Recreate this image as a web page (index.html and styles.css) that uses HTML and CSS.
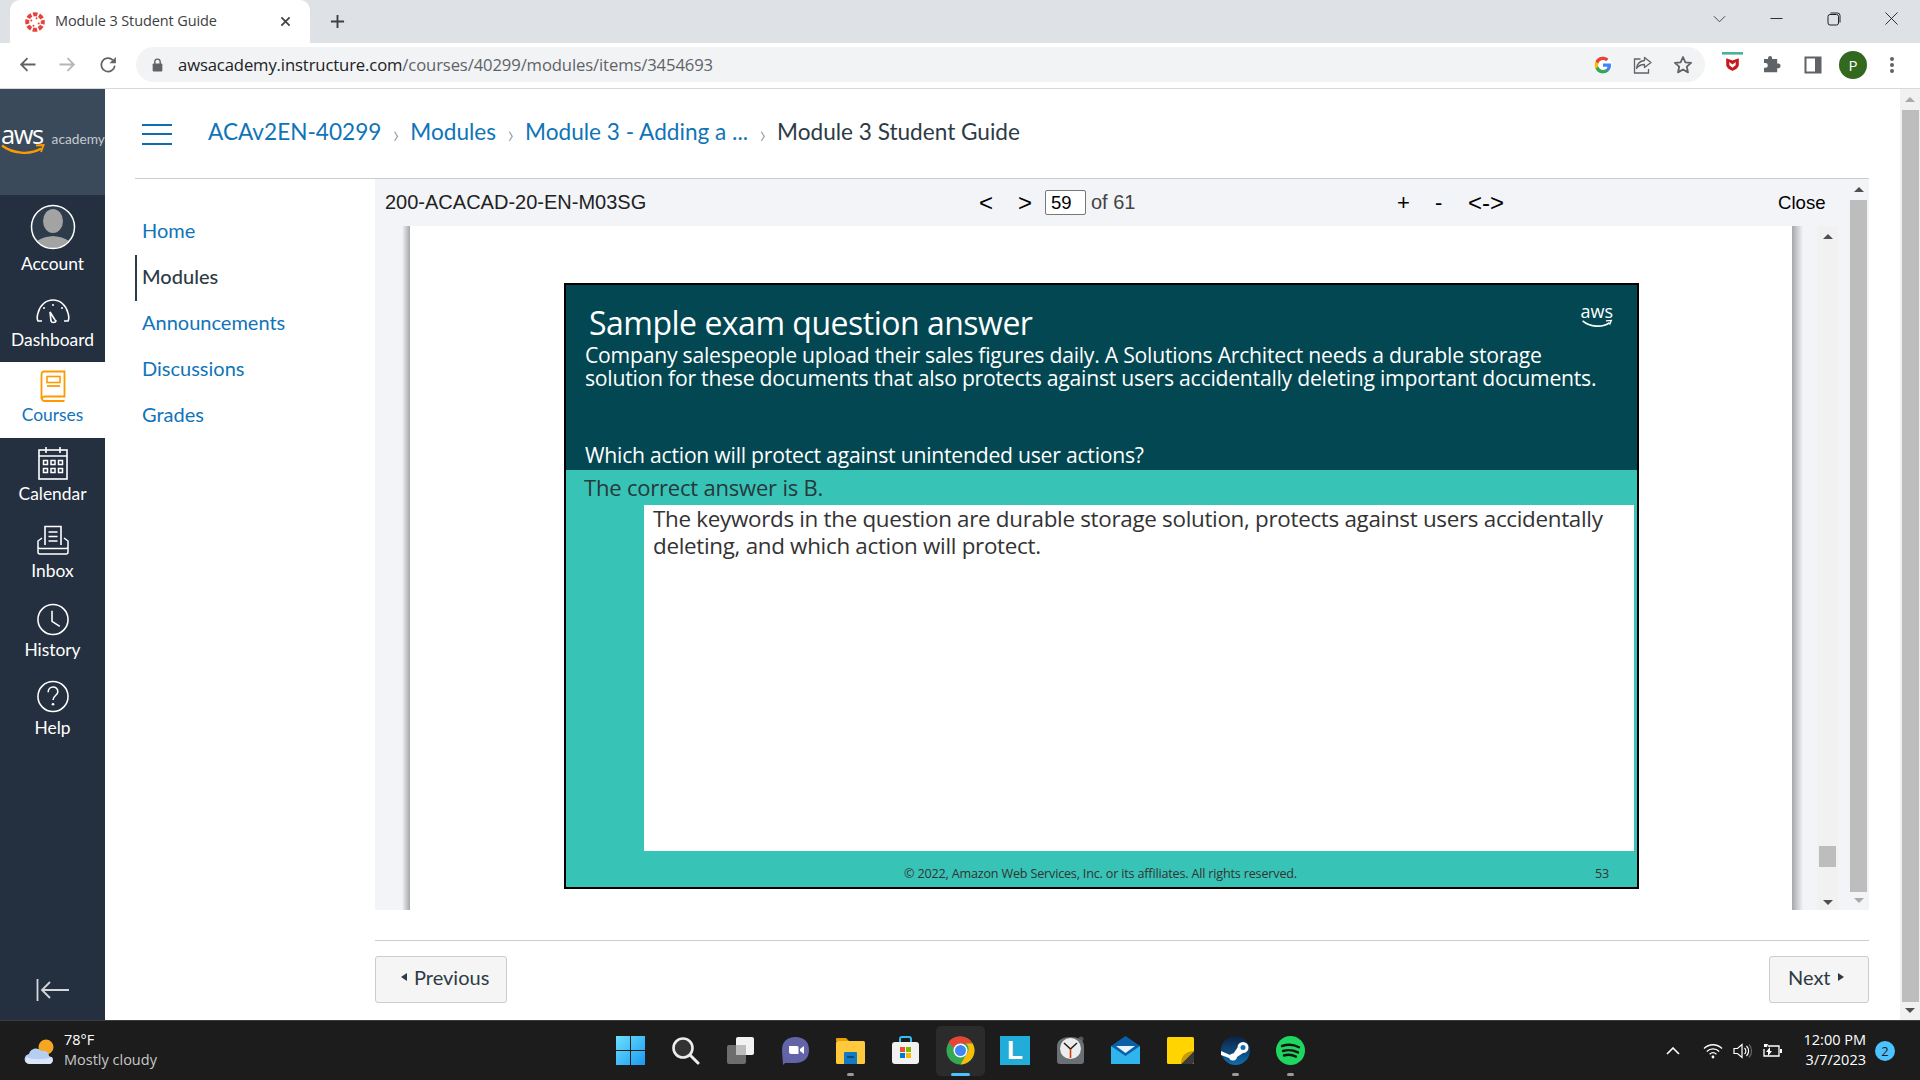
FILE: index.html
```html
<!DOCTYPE html>
<html lang="en">
<head>
<meta charset="utf-8">
<title>Module 3 Student Guide</title>
<link rel="stylesheet" href="styles.css">
</head>
<body>
<div class="app">
  <div class="tabstrip">
    <div class="tab">
      <svg class="favicon" viewBox="0 0 20 20"><circle cx="10" cy="10" r="7.800" fill="none" stroke="#e5433a" stroke-width="4" stroke-dasharray="4.400 1.726" stroke-dashoffset="2.200"/><g fill="#e5433a"><circle cx="11.500" cy="6.300" r="1"/><circle cx="13.700" cy="11.500" r="1"/><circle cx="8.500" cy="13.700" r="1"/><circle cx="6.300" cy="8.500" r="1"/></g></svg>
      <span class="tab-title">Module 3 Student Guide</span>
      <svg class="tab-close" viewBox="0 0 12 12"><path d="M1.500 1.500l9 9M10.500 1.500l-9 9" stroke="#3c4043" stroke-width="1.800" fill="none"/></svg>
    </div>
    <svg class="new-tab" viewBox="0 0 16 16"><path d="M8 1v14M1 8h14" stroke="#3c4043" stroke-width="2" fill="none"/></svg>
    <div class="win-controls">
      <svg class="win-btn w-list" viewBox="0 0 14 8"><path d="M1 1l6 6 6-6" stroke="#3c4043" stroke-width="1" fill="none"/></svg>
      <svg class="win-btn w-min" viewBox="0 0 14 14"><path d="M0.500 7h13" stroke="#202124" stroke-width="1" fill="none"/></svg>
      <svg class="win-btn w-max" viewBox="0 0 14 14"><rect x="1" y="2.500" width="10.500" height="10.500" rx="2" stroke="#202124" fill="none"/><path d="M3.500 1h7a2.500 2.500 0 0 1 2.500 2.500v7" stroke="#202124" fill="none"/></svg>
      <svg class="win-btn w-close" viewBox="0 0 14 14"><path d="M0.500 0.500l13 13M13.500 0.500l-13 13" stroke="#202124" stroke-width="1" fill="none"/></svg>
    </div>
  </div>
  <div class="toolbar">
    <svg class="tb-icon tb-back" viewBox="0 0 16 16"><path d="M15.500 8H2M8 2L2 8l6 6" stroke="#5f6368" stroke-width="1.700" fill="none"/></svg>
    <svg class="tb-icon tb-fwd" viewBox="0 0 16 16"><path d="M.5 8H14M8 2l6 6-6 6" stroke="#b4b6b9" stroke-width="1.700" fill="none"/></svg>
    <svg class="tb-icon tb-reload" viewBox="0 0 16 16"><path d="M14 8.500A6 6 0 1 1 12.300 3.700" stroke="#5f6368" stroke-width="1.500" fill="none"/><path d="M15 .8v5.700H9.300z" fill="#5f6368"/></svg>
    <div class="omnibox">
      <svg class="lock" viewBox="0 0 10 13"><path d="M2.500 5.500V3.500a2.500 2.500 0 0 1 5 0v2" stroke="#5f6368" stroke-width="1.300" fill="none"/><rect x="0.500" y="5" width="9" height="7.500" rx="1" fill="#5f6368"/></svg>
      <span class="url"><span class="url-host">awsacademy.instructure.com</span>/courses/40299/modules/items/3454693</span>
      <svg class="omni-g" viewBox="0 0 18 18"><path d="M17 9.200c0-.6-.05-1.100-.15-1.600H9v3.100h4.500a3.900 3.900 0 0 1-1.700 2.500v2.100h2.700C16.100 13.800 17 11.700 17 9.200z" fill="#4285f4"/><path d="M9 17.400c2.300 0 4.200-.8 5.500-2.100l-2.700-2.100c-.7.500-1.700.8-2.800.8-2.200 0-4-1.500-4.700-3.400H1.500v2.100A8.300 8.300 0 0 0 9 17.400z" fill="#34a853"/><path d="M4.300 10.600a5 5 0 0 1 0-3.200V5.300H1.500a8.300 8.300 0 0 0 0 7.400z" fill="#fbbc05"/><path d="M9 3.900c1.200 0 2.300.4 3.200 1.300l2.400-2.400A8.300 8.300 0 0 0 1.500 5.300l2.800 2.100C5 5.400 6.800 3.900 9 3.900z" fill="#ea4335"/></svg>
      <svg class="omni-share" viewBox="0 0 20 20"><path d="M11.500 2.500L18 7.500l-6.500 5V9.500c-3.500 0-6 1-8 4 .5-4 3-7.500 8-8z" fill="none" stroke="#5f6368" stroke-width="1.300" stroke-linejoin="round"/><path d="M7.500 4H1.500v14h14v-4" fill="none" stroke="#5f6368" stroke-width="1.300"/></svg>
      <svg class="omni-star" viewBox="0 0 20 20"><path d="M10 2l2.400 5.300 5.700.6-4.300 3.800 1.200 5.700L10 14.500l-5 2.900 1.200-5.700L1.900 7.900l5.700-.6z" fill="none" stroke="#5f6368" stroke-width="1.800" stroke-linejoin="round"/></svg>
    </div>
    <div class="ext-group">
      <svg class="ext ext-mc" viewBox="0 0 20 20"><rect x="0" y="0" width="20" height="2.500" fill="#48b596"/><path d="M4 6l6 2 6-2v6c0 3-3 5-6 6-3-1-6-3-6-6z" fill="#c8171e"/><path d="M7 9.500l3 2.500 3-2.500v3l-3 2.500-3-2.500z" fill="#fff"/></svg>
      <svg class="ext ext-puzzle" viewBox="0 0 18 18"><path d="M7 1a2 2 0 0 1 2 2v1h5v4.500h1.500a2.300 2.300 0 0 1 0 4.500H14v4H1v-4.500h1.500a2.200 2.200 0 0 0 0-4.500H1V4h4V3a2 2 0 0 1 2-2z" fill="#5f6368" transform="scale(.96)"/></svg>
      <svg class="ext ext-side" viewBox="0 0 18 18"><rect x="0.500" y="0.500" width="17" height="17" fill="#5f6368"/><rect x="2.500" y="2.500" width="8.500" height="13" fill="#fff"/></svg>
      <span class="avatar-p">P</span>
      <svg class="ext ext-menu" viewBox="0 0 6 18"><circle cx="3" cy="3" r="2" fill="#5f6368"/><circle cx="3" cy="9" r="2" fill="#5f6368"/><circle cx="3" cy="15" r="2" fill="#5f6368"/></svg>
    </div>
  </div>

  <div class="main">
    <nav class="globalnav">
      <div class="gn-logo">
        <span class="aws-word">aws</span><span class="aws-academy">academy</span>
        <svg class="aws-smile" viewBox="0 0 44 11"><path d="M1 1.500c10 8 28 10 39 3" stroke="#f90" stroke-width="2.300" fill="none"/><path d="M35 1.500l7.500-.5-2.500 7" stroke="#f90" stroke-width="1.900" fill="none"/></svg>
      </div>
      <a class="gn-item gn-account">
        <svg class="gn-avatar" viewBox="0 0 46 46"><defs><clipPath id="avc"><circle cx="23" cy="23" r="21"/></clipPath></defs><circle cx="23" cy="23" r="21.500" fill="#2d3b4a"/><g clip-path="url(#avc)" fill="#a3a3a3"><ellipse cx="23" cy="17" rx="10" ry="12"/><path d="M3 46c0-10 10-13 20-14 10 1 20 4 20 14z"/></g><circle cx="23" cy="23" r="21.500" fill="none" stroke="#fff" stroke-width="1.500"/></svg>
        <span>Account</span>
      </a>
      <a class="gn-item gn-dash">
        <svg class="gn-ico" viewBox="0 0 34 26"><path d="M6 23H2c-1-2-1-5 0-8C4 7 10 2 17 2s13 5 15 13c1 3 1 6 0 8h-4" fill="none" stroke="#fff" stroke-width="1.600"/><path d="M14 14l1 9c.5 2 4.500 2 5 0l-1-1z" fill="none" stroke="#fff" stroke-width="1.600"/><circle cx="8" cy="10" r="1" fill="#fff"/><circle cx="17" cy="7" r="1" fill="#fff"/><circle cx="26" cy="10" r="1" fill="#fff"/></svg>
        <span>Dashboard</span>
      </a>
      <a class="gn-item gn-courses">
        <svg class="gn-ico" viewBox="0 0 26 32"><path d="M4 1.500h20.500v25H5c-4 0-4 4.500 0 4.500h19.500" fill="none" stroke="#ff9900" stroke-width="1.800"/><path d="M1.500 29V4.500C1.500 2.500 2.500 1.500 4 1.500" fill="none" stroke="#ff9900" stroke-width="1.800"/><rect x="7" y="6.500" width="13" height="6" fill="none" stroke="#ff9900" stroke-width="1.600"/><path d="M7 16h13" stroke="#ff9900" stroke-width="1.800"/></svg>
        <span>Courses</span>
      </a>
      <a class="gn-item gn-cal">
        <svg class="gn-ico" viewBox="0 0 30 34"><rect x="1" y="4" width="28" height="29" fill="none" stroke="#fff" stroke-width="1.600"/><path d="M1 10h28M8 1v6M22 1v6" stroke="#fff" stroke-width="1.600" fill="none"/><g fill="none" stroke="#fff" stroke-width="1.500"><rect x="5.500" y="14.500" width="4" height="4"/><rect x="13" y="14.500" width="4" height="4"/><rect x="20.500" y="14.500" width="4" height="4"/><rect x="5.500" y="22.500" width="4" height="4"/><rect x="13" y="22.500" width="4" height="4"/><rect x="20.500" y="22.500" width="4" height="4"/></g></svg>
        <span>Calendar</span>
      </a>
      <a class="gn-item gn-inbox">
        <svg class="gn-ico" viewBox="0 0 34 30"><path d="M9 20V1.500h16V20" fill="none" stroke="#fff" stroke-width="1.600"/><path d="M12.500 7h9M12.500 11.500h9M12.500 16h9" stroke="#fff" stroke-width="1.500"/><path d="M6 13l-4 3v11c0 1 1 2 2 2h26c1 0 2-1 2-2V16l-4-3M2 18v4c0 1 1 1.500 2 1.500h26c1 0 2-.5 2-1.500v-4" fill="none" stroke="#fff" stroke-width="1.500"/></svg>
        <span>Inbox</span>
      </a>
      <a class="gn-item gn-hist">
        <svg class="gn-ico" viewBox="0 0 34 34"><circle cx="17" cy="17" r="15.500" fill="none" stroke="#fff" stroke-width="1.600"/><path d="M16 8v11l8 5" fill="none" stroke="#fff" stroke-width="1.600"/></svg>
        <span>History</span>
      </a>
      <a class="gn-item gn-help">
        <svg class="gn-ico" viewBox="0 0 34 34"><circle cx="17" cy="17" r="15.500" fill="none" stroke="#fff" stroke-width="1.600"/><path d="M12 12.500c0-7 10-7 10-.5 0 4-5 4-5 8.500" fill="none" stroke="#fff" stroke-width="1.600"/><circle cx="17" cy="25" r="1.400" fill="#fff"/></svg>
        <span>Help</span>
      </a>
      <svg class="gn-collapse" viewBox="0 0 34 22"><path d="M1.500 0v22M33 11H6M14 3l-8 8 8 8" fill="none" stroke="#d4d7da" stroke-width="1.800"/></svg>
    </nav>

    <div class="content">
      <header class="crumbs">
        <div class="hamburger"><i></i><i></i><i></i></div>
        <a class="crumb crumb-a">ACAv2EN-40299</a><span class="sep">›</span>
        <a class="crumb">Modules</a><span class="sep">›</span>
        <a class="crumb">Module 3 - Adding a ...</a><span class="sep">›</span>
        <span class="crumb crumb-cur">Module 3 Student Guide</span>
      </header>
      <div class="body-row">
        <ul class="subnav">
          <li><a>Home</a></li>
          <li class="active"><a>Modules</a></li>
          <li><a>Announcements</a></li>
          <li><a>Discussions</a></li>
          <li><a>Grades</a></li>
        </ul>
        <div class="column">
          <section class="viewer">
            <div class="viewer-left">
              <div class="v-toolbar">
                <span class="v-title">200-ACACAD-20-EN-M03SG</span>
                <span class="v-prev">&lt;</span>
                <span class="v-next">&gt;</span>
                <span class="v-input">59</span>
                <span class="v-of">of 61</span>
                <span class="v-plus">+</span>
                <span class="v-minus">-</span>
                <span class="v-fit">&lt;-&gt;</span>
                <span class="v-close">Close</span>
              </div>
              <div class="v-pages">
                <div class="strip-l"></div>
                <div class="page">
                  <div class="slide">
                    <div class="slide-top">
                      <svg class="slide-aws-smile" viewBox="0 0 34 10"><path d="M1 2c8 7 22 8 30 2" stroke="#fff" stroke-width="1.800" fill="none"/><path d="M27 2l6-.5-2 5" stroke="#fff" stroke-width="1.400" fill="none"/></svg>
                      <span class="slide-aws">aws</span>
                      <h2 class="slide-title">Sample exam question answer</h2>
                      <p class="slide-q">Company salespeople upload their sales figures daily. A Solutions Architect needs a durable storage<br>solution for these documents that also protects against users accidentally deleting important documents.</p>
                      <p class="slide-which">Which action will protect against unintended user actions?</p>
                    </div>
                    <div class="slide-bottom">
                      <p class="slide-correct">The correct answer is B.</p>
                      <div class="slide-box">The keywords in the question are durable storage solution, protects against users accidentally<br>deleting, and which action will protect.</div>
                      <div class="slide-foot"><span class="foot-c">© 2022, Amazon Web Services, Inc. or its affiliates. All rights reserved.</span><span class="foot-n">53</span></div>
                    </div>
                  </div>
                </div>
                <div class="strip-r"></div>
                <div class="sb sb-inner">
                  <span class="arr up dark"></span>
                  <span class="sb-thumb small"></span>
                  <span class="arr down dark"></span>
                </div>
                <div class="strip-gap"></div>
              </div>
            </div>
            <div class="sb sb-viewer">
              <span class="arr up dark"></span>
              <span class="sb-thumb grow"></span>
              <span class="arr down"></span>
            </div>
          </section>
          <footer class="pager">
            <a class="btn btn-prev"><i class="tri-l"></i>Previous</a>
            <a class="btn btn-next">Next<i class="tri-r"></i></a>
          </footer>
        </div>
      </div>
    </div>

    <div class="sb sb-page">
      <span class="arr up"></span>
      <span class="sb-thumb grow"></span>
      <span class="arr down dark"></span>
    </div>
  </div>

  <div class="taskbar">
    <div class="tk-left">
      <svg class="weather" viewBox="0 0 32 26"><circle cx="22" cy="8" r="7.500" fill="#f5a623"/><path d="M6 25c-7 0-7-9-1-10 1-5 8-8 12-3 5-1 8 2 8 5 5 1 5 8 0 8z" fill="#b5cef2"/><path d="M6 25c-5 0-6-5-3-7 4 3 17 3 25 0 2 3 0 7-3 7z" fill="#dbe7f8"/></svg>
      <div class="w-text"><span class="w-temp">78°F</span><span class="w-desc">Mostly cloudy</span></div>
    </div>
    <div class="tk-center">
      <div class="tk-slot"><svg class="tk-ico" viewBox="0 0 29 29"><defs><linearGradient id="wg" x1="0" y1="0" x2="1" y2="1"><stop offset="0" stop-color="#6ce0ff"/><stop offset="1" stop-color="#1a9af0"/></linearGradient></defs><path fill="url(#wg)" d="M0 0h14v14H0zM15 0h14v14H15zM0 15h14v14H0zM15 15h14v14H15z"/></svg></div>
      <div class="tk-slot"><svg class="tk-ico" viewBox="0 0 29 29"><circle cx="12" cy="12" r="9.500" fill="#333" stroke="#ececec" stroke-width="2.600"/><path d="M19 19l8 8" stroke="#ececec" stroke-width="3" stroke-linecap="round"/></svg></div>
      <div class="tk-slot"><svg class="tk-ico" viewBox="0 0 29 29"><rect x="10" y="1" width="18" height="18" rx="2" fill="#f2f2f2"/><rect x="1" y="9" width="19" height="19" rx="2" fill="#6d6d6d"/><rect x="10" y="9" width="10" height="10" fill="#bdbdbd"/></svg></div>
      <div class="tk-slot"><svg class="tk-ico" viewBox="0 0 29 29"><path d="M14.500 1C23 1 28 6 28 14s-5 13-13.500 13H4l-2 2c0-4-1-10-1-15C1 6 6 1 14.500 1z" fill="#6264a7"/><path d="M8 10h8a1.500 1.500 0 0 1 1.500 1.500V18H10a2 2 0 0 1-2-2zM19 13l4-3v8l-4-3z" fill="#fff"/></svg></div>
      <div class="tk-slot"><svg class="tk-ico" viewBox="0 0 29 29"><path d="M0 3a1 1 0 0 1 1-1h9l3 3H0z" fill="#e8a100"/><rect y="5" width="29" height="23" rx="1.500" fill="#ffc83d"/><path d="M9 16h11a1 1 0 0 1 1 1v11H8V17a1 1 0 0 1 1-1z" fill="#1279c4"/><rect x="11" y="20" width="7" height="2" fill="#0b4a7d"/></svg><i class="tk-dot"></i></div>
      <div class="tk-slot"><svg class="tk-ico" viewBox="0 0 29 29"><path d="M9 7V3a2 2 0 0 1 2-2h7a2 2 0 0 1 2 2v4" fill="none" stroke="#35bdf0" stroke-width="2"/><rect x="1" y="6" width="27" height="22" rx="3" fill="#f2f2f2"/><rect x="9" y="11" width="5" height="5" fill="#f25022"/><rect x="15" y="11" width="5" height="5" fill="#7fba00"/><rect x="9" y="17" width="5" height="5" fill="#0078d4"/><rect x="15" y="17" width="5" height="5" fill="#ffb900"/></svg></div>
      <div class="tk-slot tk-active"><svg class="tk-ico" viewBox="0 0 29 29"><circle cx="14.500" cy="14.500" r="14" fill="#34a853"/><path d="M14.500.5a14 14 0 0 1 12.100 7H14.500a7 7 0 0 0-6.600 4.700L2.500 6a14 14 0 0 1 12-5.500z" fill="#ea4335"/><path d="M26.600 7.500A14 14 0 0 1 14.500 28.500l6-10.500a7 7 0 0 0-.5-10.500z" fill="#fbbc05"/><circle cx="14.500" cy="14.500" r="7" fill="#fff"/><circle cx="14.500" cy="14.500" r="5.500" fill="#4285f4"/></svg><i class="tk-bar"></i></div>
      <div class="tk-slot"><span class="tk-l">L</span></div>
      <div class="tk-slot"><svg class="tk-ico" viewBox="0 0 29 29"><circle cx="25" cy="3" r="2.500" fill="#555"/><path d="M1 10C1 4 7 1 14.500 1S28 4 28 10v15a3 3 0 0 1-3 3H4a3 3 0 0 1-3-3z" fill="#6b7076"/><circle cx="14.500" cy="12.500" r="10.500" fill="#ededed"/><path d="M8 7l6.500 6L21 7" stroke="#222" stroke-width="1.600" fill="none"/><path d="M14.500 13v9" stroke="#d83b01" stroke-width="1.600"/></svg></div>
      <div class="tk-slot"><svg class="tk-ico" viewBox="0 0 29 29"><path d="M14.500 0L29 10v18H0V10z" fill="#0b5fa8"/><path d="M0 10l14.500 10L29 10v18H0z" fill="#2fb4ee"/><path d="M5 10h19l-9.500 7z" fill="#e8f3fa"/></svg></div>
      <div class="tk-slot"><svg class="tk-ico" viewBox="0 0 29 29"><rect x="1" y="1" width="27" height="27" rx="1.500" fill="#ffd400"/><path d="M15 28l13-13v11a2 2 0 0 1-2 2z" fill="#3a3a3a"/><path d="M15 28c0-8 5-13 13-13" fill="#c89a00"/></svg></div>
      <div class="tk-slot"><svg class="tk-ico" viewBox="0 0 29 29"><defs><linearGradient id="stg" x1="0" y1="0" x2="0" y2="1"><stop offset="0" stop-color="#0d2140"/><stop offset="1" stop-color="#0f6cb0"/></linearGradient></defs><circle cx="14.500" cy="14.500" r="14.500" fill="url(#stg)"/><path d="M0 15l9 4c1-1 2-1.500 3.500-1.500l4-6a5.500 5.500 0 1 1 5.500 5.500l-6 4a4.200 4.200 0 0 1-8 1L0 19z" fill="#fff"/><circle cx="22" cy="11.500" r="2.500" fill="#1a6ca8"/></svg><i class="tk-dot"></i></div>
      <div class="tk-slot"><svg class="tk-ico" viewBox="0 0 29 29"><circle cx="14.500" cy="14.500" r="14.500" fill="#1ed760"/><path d="M6 10c6-2 12-1.500 17 1.200M7 15c5-1.500 10-1 15 1.400M8 19.500c4-1.200 8-.8 12 1.100" fill="none" stroke="#191414" stroke-width="2.400" stroke-linecap="round"/></svg><i class="tk-dot"></i></div>
    </div>
    <div class="tk-right">
      <svg class="tray tray-up" viewBox="0 0 14 8"><path d="M1 7l6-6 6 6" stroke="#fff" stroke-width="1.600" fill="none"/></svg>
      <svg class="tray tray-wifi" viewBox="0 0 20 16"><path d="M1 5.500c5-5 13-5 18 0M3.800 8.500c3.500-3.400 9-3.400 12.400 0M6.600 11.300c2-1.900 4.800-1.900 6.800 0" fill="none" stroke="#fff" stroke-width="1.300"/><circle cx="10" cy="14" r="1.400" fill="#fff"/></svg>
      <svg class="tray tray-vol" viewBox="0 0 20 16"><path d="M1 5.500h3.500L9 1.500v13l-4.500-4H1z" fill="none" stroke="#fff" stroke-width="1.200"/><path d="M11.500 5a4 4 0 0 1 0 6M13.500 3a7 7 0 0 1 0 10" fill="none" stroke="#fff" stroke-width="1.200"/><path d="M16 1.500a9.500 9.500 0 0 1 0 13" fill="none" stroke="#666" stroke-width="1.200"/></svg>
      <svg class="tray tray-bat" viewBox="0 0 20 16"><path d="M5 3h11v10H1V6" fill="none" stroke="#fff" stroke-width="1.300"/><rect x="17" y="6" width="2" height="4" fill="#fff"/><path d="M7 4v4h2l-4 5v-4H3z" fill="#fff"/><path d="M1 1h4l-1 3H1z" fill="#fff"/></svg>
      <div class="clock"><span>12:00 PM</span><span>3/7/2023</span></div>
      <span class="badge">2</span>
    </div>
  </div>
</div>
</body>
</html>
```

FILE: styles.css
```css
* { box-sizing: border-box; }
html, body { margin: 0; padding: 0; }
body { width: 1920px; height: 1080px; overflow: hidden; font-family: "Lato", "Open Sans", sans-serif; background: #fff; }
.app { width: 1920px; height: 1080px; display: flex; flex-direction: column; }

/* browser chrome */
.tabstrip { height: 43px; background: #dee1e6; display: flex; align-items: center; padding-left: 10px; flex: none; }
.tab { width: 300px; height: 43px; background: #fff; border-radius: 10px 10px 0 0; display: flex; align-items: center; padding-left: 15px; }
.favicon { width: 20px; height: 20px; flex: none; }
.tab-title { font: 14.5px "Open Sans", sans-serif; color: #3c4043; margin: 0 0 2px 10px; width: 225px; white-space: nowrap; letter-spacing: -0.1px; }
.tab-close { width: 11px; height: 11px; flex: none; }
.new-tab { width: 15px; height: 15px; margin-left: 20px; flex: none; }
.win-controls { margin-left: auto; display: flex; align-items: center; height: 43px; padding-bottom: 6px; }
.win-btn { display: block; flex: none; }
.w-list { width: 13px; height: 8px; margin-right: 44px; }
.w-min { width: 13px; height: 13px; margin-right: 44px; }
.w-max { width: 14px; height: 14px; margin-right: 44px; }
.w-close { width: 13px; height: 13px; margin-right: 22px; }

.toolbar { height: 46px; flex: none; background: #fff; border-bottom: 1px solid #d6d8da; display: flex; align-items: center; padding: 0 0 2px 19px; }
.tb-icon { flex: none; display: block; }
.tb-back { width: 17px; height: 17px; }
.tb-fwd { width: 17px; height: 17px; margin-left: 23px; }
.tb-reload { width: 18px; height: 18px; margin-left: 23px; }
.omnibox { width: 1569px; height: 35px; margin-left: 19px; border-radius: 18px; background: #f1f3f4; display: flex; align-items: center; padding-left: 16px; flex: none; }
.lock { width: 11px; height: 14px; flex: none; }
.url { font: 16.65px "Open Sans", sans-serif; color: #5f6368; margin-left: 15px; width: 1416px; white-space: nowrap; letter-spacing: -0.12px; }
.url-host { color: #202124; }
.omni-g { width: 18px; height: 18px; flex: none; background: #fff; border-radius: 50%; }
.omni-share { width: 20px; height: 20px; margin-left: 21px; flex: none; }
.omni-star { width: 20px; height: 20px; margin-left: 20px; flex: none; }
.ext-group { display: flex; align-items: center; margin-left: 17px; }
.ext { display: block; flex: none; }
.ext-mc { width: 21px; height: 21px; margin-top: -4px; }
.ext-puzzle { width: 19px; height: 19px; margin-left: 20px; }
.ext-side { width: 18px; height: 18px; margin-left: 22px; }
.avatar-p { width: 28px; height: 28px; margin-left: 17px; border-radius: 50%; background: #33691e; color: #fff; font: 15px "Open Sans", sans-serif; display: flex; align-items: center; justify-content: center; flex: none; }
.ext-menu { width: 6px; height: 18px; margin-left: 22px; }

.main { flex: 1; display: flex; min-height: 0; }

/* global nav */
.globalnav { width: 105px; flex: none; background: #243040; display: flex; flex-direction: column; }
.gn-logo { height: 106px; background: #3b4a5a; position: relative; display: flex; align-items: baseline; flex: none; padding-top: 30px; }
.aws-word { font: 500 25.5px/30px "Open Sans", sans-serif; color: #fff; margin-left: 1px; letter-spacing: -1.5px; }
.aws-academy { font: 13.7px "Lato", sans-serif; color: #c4cad0; margin-left: 9px; white-space: nowrap; }
.aws-smile { position: absolute; left: 1px; top: 55px; width: 44px; height: 11px; }
.gn-item { display: flex; flex-direction: column; align-items: center; color: #fff; font-size: 17.4px; line-height: 20px; flex: none; }
.gn-item span { display: block; }
.gn-account { height: 91px; padding-top: 9px; }
.gn-avatar { width: 46px; height: 46px; margin-bottom: 4px; }
.gn-ico { display: block; }
.gn-dash { height: 76px; padding-top: 12px; }
.gn-dash .gn-ico { width: 34px; height: 26px; margin-bottom: 6px; }
.gn-courses { height: 76px; background: #fff; color: #0f74b8; padding-top: 8px; }
.gn-courses .gn-ico { width: 26px; height: 32px; margin-bottom: 3px; }
.gn-cal { height: 78px; padding-top: 8px; }
.gn-cal .gn-ico { width: 30px; height: 34px; margin-bottom: 4px; }
.gn-inbox { height: 78px; padding-top: 9px; }
.gn-inbox .gn-ico { width: 34px; height: 30px; margin-bottom: 6px; }
.gn-hist { height: 78px; padding-top: 9px; }
.gn-hist .gn-ico { width: 34px; height: 33px; margin-bottom: 4px; }
.gn-help { height: 78px; padding-top: 8px; }
.gn-help .gn-ico { width: 34px; height: 33px; margin-bottom: 5px; }
.gn-collapse { width: 34px; height: 22px; margin: auto 0 19px 36px; display: block; }

/* content */
.content { flex: 1; min-width: 0; padding: 0 31px 0 30px; display: flex; flex-direction: column; }
.crumbs { height: 90px; flex: none; border-bottom: 1px solid #c7cdd1; display: flex; align-items: center; padding: 0 0 5px 7px; font-size: 22.6px; white-space: nowrap; }
.hamburger { width: 30px; height: 21px; display: flex; flex-direction: column; justify-content: space-between; margin: 6px 36px 0 0; }
.hamburger i { display: block; height: 2px; background: #0f6eb0; }
.crumb { color: #0f74b8; }
.crumb-cur { color: #2d3b45; }
.sep { color: #7b868e; font-size: 25px; line-height: 24px; width: 29px; text-align: center; font-weight: 300; margin-top: 3px; }
.body-row { flex: 1; display: flex; min-height: 0; }
.subnav { width: 240px; flex: none; margin: 0; padding: 30px 0 0; list-style: none; font-size: 20px; }
.subnav li { height: 46px; display: flex; align-items: center; padding: 0 0 4px 7px; color: #0f74b8; }
.subnav li.active { color: #2d3b45; font-weight: 500; box-shadow: inset 2px 0 0 #2d3b45; }
.column { flex: 1; min-width: 0; display: flex; flex-direction: column; }

.viewer { height: 731px; display: flex; flex: none; }
.viewer-left { flex: 1; min-width: 0; display: flex; flex-direction: column; }
.v-toolbar { height: 47px; flex: none; background: #f3f4f8; display: grid; grid-template-columns: 594px 39px 27px 46px 306px 38px 33px 310px 1fr; align-items: center; font: 20px "Liberation Sans", sans-serif; color: #222; padding: 0 0 0 10px; }
.v-title { white-space: nowrap; }
.v-prev, .v-next { font-size: 24px; color: #000; }
.v-input { width: 41px; height: 25px; border: 1px solid #777; border-radius: 2px; background: #fff; font-size: 18.5px; color: #000; display: flex; align-items: center; padding-left: 5px; }
.v-of { color: #444; }
.v-plus, .v-minus { color: #000; font-size: 22px; }
.v-fit { color: #000; font-size: 24px; }
.v-close { color: #000; font-size: 18.6px; }
.v-pages { flex: 1; display: flex; min-height: 0; background: #f3f4f8; }
.strip-l { width: 35px; flex: none; background: linear-gradient(90deg, #f3f4f8 0, #f3f4f8 27px, #a5a6aa 35px); }
.page { width: 1382px; flex: none; background: #fff; padding: 57px 0 0 154px; }
.strip-r { width: 25px; flex: none; background: linear-gradient(90deg, #a5a6aa 0, #f3f4f8 11px); }
.strip-gap { width: 10px; flex: none; }

/* scrollbars */
.sb { display: flex; flex-direction: column; align-items: center; background: #f1f1f1; flex: none; }
.sb-viewer { width: 21px; background: #f3f4f8; }
.sb-inner { width: 21px; }
.sb-page { width: 20px; margin-left: auto; }
.arr { display: block; flex: none; width: 0; height: 0; border-left: 5px solid transparent; border-right: 5px solid transparent; }
.arr.up { border-bottom: 5px solid #a9a9a9; margin: 8px 0 8px; }
.arr.down { border-top: 5px solid #a9a9a9; margin: 6px 0 7px; }
.sb-inner .arr.down { margin: 8px 0 5px; }
.arr.dark.up { border-bottom-color: #505050; }
.arr.dark.down { border-top-color: #505050; }
.sb-thumb { display: block; width: 17px; background: #bdbdbd; }
.sb-thumb.grow { flex: 1; }
.sb-thumb.small { height: 21px; margin-top: auto; margin-bottom: 25px; }

/* slide */
.slide { width: 1075px; height: 606px; border: 2px solid #000; display: flex; flex-direction: column; font-family: "Open Sans", sans-serif; }
.slide-top { height: 185px; flex: none; background: #024751; color: #fff; position: relative; padding: 18px 0 0 19px; }
.slide-aws { position: absolute; right: 24px; top: 17px; font-size: 18px; line-height: 18px; color: #fff; }
.slide-aws-smile { position: absolute; right: 24px; top: 34px; width: 32px; height: 9px; }
.slide-title { margin: 0 0 0 4px; font-weight: 400; font-size: 32px; line-height: 40px; letter-spacing: -0.5px; white-space: nowrap; }
.slide-q { margin: 0; font-size: 21.2px; line-height: 23px; white-space: nowrap; letter-spacing: -0.25px; }
.slide-which { margin: 53px 0 0; font-size: 21.2px; line-height: 26px; white-space: nowrap; letter-spacing: -0.25px; }
.slide-bottom { flex: 1; background: #37c3b5; display: flex; flex-direction: column; min-height: 0; position: relative; }
.slide-correct { margin: 0; height: 35px; padding: 4px 0 0 18px; font-size: 22px; line-height: 26px; color: #28383c; letter-spacing: -0.2px; white-space: nowrap; }
.slide-box { margin-left: 78px; margin-right: 3px; height: 346px; background: #fff; color: #333; font-size: 22.4px; line-height: 27px; padding: 0 0 0 9px; white-space: nowrap; letter-spacing: -0.3px; }
.slide-foot { flex: 1; font-size: 12.6px; color: #333; display: flex; align-items: center; padding: 8px 0 0 338px; letter-spacing: -0.18px; white-space: nowrap; }
.foot-n { margin-left: 298px; }

/* pager */
.pager { height: 110px; flex: none; margin-top: 30px; border-top: 1px solid #c7cdd1; display: flex; justify-content: space-between; align-items: flex-start; padding-top: 15px; }
.btn { height: 47px; background: #f5f5f5; border: 1px solid #c7cdd1; border-radius: 3px; display: flex; align-items: center; font-size: 20px; color: #2d3b45; padding-bottom: 5px; }
.btn-prev { width: 132px; padding-left: 25px; }
.btn-next { width: 100px; padding-left: 18px; }
.tri-l { width: 0; height: 0; border: 4px solid transparent; border-right: 6px solid #2d3b45; border-left: 0; margin-right: 7px; }
.tri-r { width: 0; height: 0; border: 4px solid transparent; border-left: 6px solid #2d3b45; border-right: 0; margin-left: 7px; }

/* taskbar */
.taskbar { height: 60px; flex: none; background: #1c1c1c; border-top: 1px solid #3c3c3c; display: grid; grid-template-columns: 1fr auto 1fr; align-items: center; }
.tk-left { display: flex; align-items: center; padding-left: 24px; }
.weather { width: 32px; height: 26px; flex: none; margin-top: 2px; }
.w-text { display: flex; flex-direction: column; margin: -2px 0 0 8px; font: 14.5px/20px "Open Sans", sans-serif; }
.w-temp { color: #fff; }
.w-desc { color: #c8c8c8; }
.tk-center { display: flex; height: 59px; align-items: center; }
.tk-slot { width: 55px; height: 50px; display: flex; align-items: center; justify-content: center; position: relative; border-radius: 5px; }
.tk-active { background: #2b2b2b; width: 49px; margin: 0 3px; }
.tk-ico { width: 29px; height: 29px; display: block; }
.tk-dot { position: absolute; left: 24px; bottom: 0; width: 7px; height: 3px; border-radius: 2px; background: #9a9a9a; }
.tk-bar { position: absolute; left: 15px; bottom: 0; width: 19px; height: 3px; border-radius: 2px; background: #4cc2ff; }
.tk-l { width: 30px; height: 29px; background: #22acd9; color: #fff; font: 700 26px/29px "Liberation Sans", sans-serif; text-align: center; }
.tk-right { display: flex; align-items: center; justify-content: flex-end; padding-right: 25px; }
.tray { display: block; flex: none; }
.tray-up { width: 14px; height: 8px; margin-right: 23px; }
.tray-wifi { width: 20px; height: 16px; margin-right: 10px; }
.tray-vol { width: 20px; height: 16px; margin-right: 10px; }
.tray-bat { width: 20px; height: 16px; margin-right: 19px; }
.clock { display: flex; flex-direction: column; align-items: flex-end; font: 14.5px/20px "Open Sans", sans-serif; color: #fff; white-space: nowrap; margin: -1px 9px 0 0; width: 64px; }
.badge { width: 20px; height: 20px; border-radius: 50%; background: #4cc2ff; color: #1c1c1c; font: 13px/20px "Open Sans", sans-serif; text-align: center; flex: none; }
```
